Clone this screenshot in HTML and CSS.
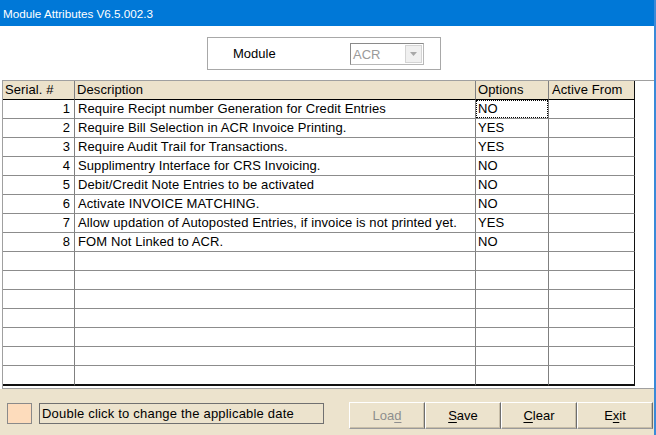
FILE: index.html
```html
<!DOCTYPE html>
<html>
<head>
<meta charset="utf-8">
<link rel="stylesheet" href="styles.css">
</head>
<body>
<div class="window">
  <div class="titlebar">Module Attributes V6.5.002.3</div>
  <div class="client">
    <div class="module-box">
      <span class="module-label">Module</span>
      <div class="combo">
        <span class="combo-text">ACR</span>
        <span class="combo-btn"><svg width="7" height="4" viewBox="0 0 7 4"><path d="M0 0H7L3.5 4Z" fill="#a8a8a8"/></svg></span>
      </div>
    </div>
    <div class="grid-wrap">
      <div class="grid">
        <div class="row head">
          <div class="cell c-serial">Serial. #</div>
          <div class="cell c-desc">Description</div>
          <div class="cell c-opt">Options</div>
          <div class="cell c-from">Active From</div>
        </div>
        <div class="row">
          <div class="cell c-serial num">1</div>
          <div class="cell c-desc">Require Recipt number Generation for Credit Entries</div>
          <div class="cell c-opt"><span class="focus">NO</span></div>
          <div class="cell c-from"></div>
        </div>
        <div class="row">
          <div class="cell c-serial num">2</div>
          <div class="cell c-desc">Require Bill Selection in ACR Invoice Printing.</div>
          <div class="cell c-opt">YES</div>
          <div class="cell c-from"></div>
        </div>
        <div class="row">
          <div class="cell c-serial num">3</div>
          <div class="cell c-desc">Require Audit Trail for Transactions.</div>
          <div class="cell c-opt">YES</div>
          <div class="cell c-from"></div>
        </div>
        <div class="row">
          <div class="cell c-serial num">4</div>
          <div class="cell c-desc">Supplimentry Interface for CRS Invoicing.</div>
          <div class="cell c-opt">NO</div>
          <div class="cell c-from"></div>
        </div>
        <div class="row">
          <div class="cell c-serial num">5</div>
          <div class="cell c-desc">Debit/Credit Note Entries to be activated</div>
          <div class="cell c-opt">NO</div>
          <div class="cell c-from"></div>
        </div>
        <div class="row">
          <div class="cell c-serial num">6</div>
          <div class="cell c-desc">Activate INVOICE MATCHING.</div>
          <div class="cell c-opt">NO</div>
          <div class="cell c-from"></div>
        </div>
        <div class="row">
          <div class="cell c-serial num">7</div>
          <div class="cell c-desc">Allow updation of Autoposted Entries, if invoice is not printed yet.</div>
          <div class="cell c-opt">YES</div>
          <div class="cell c-from"></div>
        </div>
        <div class="row">
          <div class="cell c-serial num">8</div>
          <div class="cell c-desc">FOM Not Linked to ACR.</div>
          <div class="cell c-opt">NO</div>
          <div class="cell c-from"></div>
        </div>
        <div class="row"><div class="cell c-serial"></div><div class="cell c-desc"></div><div class="cell c-opt"></div><div class="cell c-from"></div></div>
        <div class="row"><div class="cell c-serial"></div><div class="cell c-desc"></div><div class="cell c-opt"></div><div class="cell c-from"></div></div>
        <div class="row"><div class="cell c-serial"></div><div class="cell c-desc"></div><div class="cell c-opt"></div><div class="cell c-from"></div></div>
        <div class="row"><div class="cell c-serial"></div><div class="cell c-desc"></div><div class="cell c-opt"></div><div class="cell c-from"></div></div>
        <div class="row"><div class="cell c-serial"></div><div class="cell c-desc"></div><div class="cell c-opt"></div><div class="cell c-from"></div></div>
        <div class="row"><div class="cell c-serial"></div><div class="cell c-desc"></div><div class="cell c-opt"></div><div class="cell c-from"></div></div>
        <div class="row last"><div class="cell c-serial"></div><div class="cell c-desc"></div><div class="cell c-opt"></div><div class="cell c-from"></div></div>
      </div>
    </div>
  </div>
  <div class="footer">
    <div class="swatch"></div>
    <div class="hint">Double click to change the applicable date</div>
    <div class="buttons">
      <div class="btn disabled">Loa<u>d</u></div>
      <div class="btn"><u>S</u>ave</div>
      <div class="btn"><u>C</u>lear</div>
      <div class="btn">E<u>x</u>it</div>
    </div>
  </div>
</div>
</body>
</html>
```
FILE: styles.css
```css
* { box-sizing: border-box; }
html, body { margin: 0; padding: 0; background: #ffffff; }
body { width: 656px; height: 435px; overflow: hidden; font-family: "Liberation Sans", Arial, sans-serif; font-size: 13px; color: #000; }

.window {
  width: 656px;
  height: 435px;
  border-right: 2px solid #3a8ad8;
  display: flex;
  flex-direction: column;
  background: #ffffff;
}

.titlebar {
  height: 26px;
  background: #0078d7;
  color: #ffffff;
  font-size: 11.7px;
  line-height: 28px;
  padding-left: 3px;
  white-space: nowrap;
}

.client { background: #ffffff; }

.module-box {
  margin: 11px 0 0 207px;
  width: 234px;
  height: 33px;
  border: 1px solid #a8a8a8;
  display: flex;
  align-items: center;
}
.module-label { margin-left: 25px; width: 117px; }
.combo {
  width: 74px;
  height: 22px;
  margin-top: 1px;
  border: 1px solid #b8b8b8;
  border-top-color: #8a8a8a;
  border-left-color: #8a8a8a;
  display: flex;
  align-items: center;
  justify-content: space-between;
  background: #ffffff;
}
.combo-text { color: #9a9a9a; padding-left: 2px; }
.combo-btn {
  width: 17px;
  height: 18px;
  margin-right: 1px;
  background: #f0f0f0;
  border: 1px solid #d4d4d4;
  display: flex;
  align-items: center;
  justify-content: center;
}

.grid-wrap {
  margin: 10px 0 0 2px;
  width: 652px;
  border-top: 1px solid #a0a0a0;
  border-left: 1px solid #a0a0a0;
  border-bottom: 1px solid #a0a0a0;
  padding-bottom: 2px;
}
.grid { width: 632px; letter-spacing: 0.1px; }
.row { display: flex; height: 19px; }
.row.last { height: 20px; }
.cell {
  height: 100%;
  border-right: 1px solid #808080;
  border-bottom: 1px solid #8c8c8c;
  line-height: 18px;
  white-space: nowrap;
  overflow: hidden;
  padding-left: 3px;
}
.head .cell { background: #ece2cb; border-bottom-color: #000; padding-left: 2px; }
.row.last .cell { border-bottom: 2px solid #111; }
.c-serial { width: 72px; }
.c-desc { width: 401px; }
.c-opt { width: 73px; padding-left: 2px; }
.c-from { width: 86px; border-right-color: #111 !important; }
.head .c-from { padding-left: 3px; }
.num { text-align: right; padding-right: 4px; }
.focus {
  display: block;
  margin-left: -2px;
  height: 18px;
  padding-left: 1px;
  border: 1px dotted #000;
  line-height: 16px;
  width: 72px;
}

.footer {
  flex: 1;
  background: #ece3cd;
  display: flex;
  align-items: flex-start;
  padding-right: 1px;
}
.swatch {
  margin: 14px 0 0 7px;
  width: 25px;
  height: 21px;
  border: 1px solid #8a8a8a;
  background: #fddcbc;
}
.hint {
  margin: 14px 0 0 7px;
  width: 285px;
  height: 21px;
  border: 1px solid #707070;
  line-height: 19px;
  padding-left: 2px;
  white-space: nowrap;
  letter-spacing: 0.2px;
}
.buttons { margin: 13px 0 0 auto; display: flex; }
.btn {
  width: 76px;
  height: 27px;
  border-top: 1px solid #ffffff;
  border-left: 1px solid #ffffff;
  border-right: 1px solid #6e6e6e;
  border-bottom: 1px solid #9a9a9a;
  box-shadow: inset -1px -1px 0 #c8bea8;
  text-align: center;
  line-height: 25px;
  color: #000;
}
.btn.disabled { color: #8e8e8e; }
.btn u { text-underline-offset: 2px; }
```
